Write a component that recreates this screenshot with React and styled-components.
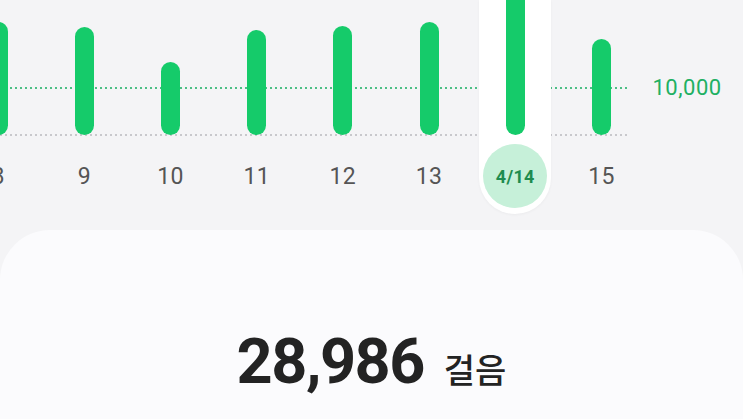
import React from "react";
import styled, { createGlobalStyle } from "styled-components";

const Global = createGlobalStyle`
  html, body { margin: 0; padding: 0; background: #f4f4f6; overflow: hidden; }
  body { font-family: Roboto, "Noto Sans", "Noto Sans CJK KR", sans-serif; }
  #root { height: 419px; }
`;

const Page = styled.div`
  height: 419px;
  display: flex;
  flex-direction: column;
  background: #f4f4f6;
  overflow: hidden;
`;

const ChartSection = styled.div`
  position: relative;
  height: 230px;
  flex: none;
`;

const GridLine = styled.div`
  position: absolute;
  left: 0;
  width: 630px;
  height: 2px;
  top: ${(p) => p.$top}px;
  background: repeating-linear-gradient(
    to right,
    ${(p) => p.$color} 0 2px,
    transparent 2px 5px
  );
`;

const Row = styled.div`
  position: relative;
  display: flex;
  align-items: flex-start;
  margin-left: -45px;
  height: 100%;
`;

const Column = styled.div`
  width: 86.2px;
  flex: none;
  display: flex;
  justify-content: center;
`;

const Track = styled.div`
  width: 72px;
  height: 214px;
  box-sizing: border-box;
  display: flex;
  flex-direction: column;
  align-items: center;
  border-radius: 0 0 36px 36px;
  background: ${(p) => (p.$selected ? "#ffffff" : "transparent")};
  box-shadow: ${(p) => (p.$selected ? "0 1px 3px rgba(0,0,0,0.04)" : "none")};
`;

const BarArea = styled.div`
  height: 135px;
  display: flex;
  align-items: flex-end;
`;

const Bar = styled.div`
  width: 19px;
  border-radius: 10px;
  background: #15cb6a;
`;

const DayLabel = styled.div`
  margin-top: 9px;
  width: 64px;
  height: 64px;
  border-radius: 50%;
  display: flex;
  align-items: center;
  justify-content: center;
  font-size: ${(p) => (p.$selected ? "18px" : "23px")};
  letter-spacing: 0.3px;
  font-weight: ${(p) => (p.$selected ? 700 : 400)};
  color: ${(p) => (p.$selected ? "#1e8c4f" : "#555555")};
  background: ${(p) => (p.$selected ? "#c6f0d9" : "transparent")};
`;

const GoalLabel = styled.div`
  margin-top: 76px;
  margin-left: 8px;
  font-size: 22px;
  letter-spacing: 0.5px;
  line-height: 24px;
  color: #20b062;
`;

const Card = styled.div`
  flex: 1;
  background: #fbfbfd;
  border-radius: 50px 50px 0 0;
  display: flex;
  justify-content: center;
  align-items: baseline;
  padding-top: 100px;
`;

const Steps = styled.span`
  font-size: 63px;
  font-weight: 700;
  letter-spacing: -1.5px;
  color: #232323;
  line-height: 1;
`;

const Unit = styled.span`
  margin-left: 20px;
  font-family: "Noto Sans CJK KR", sans-serif;
  font-size: 34px;
  font-weight: 500;
  color: #232323;
`;

const days = [
  { label: "8", h: 113 },
  { label: "9", h: 108 },
  { label: "10", h: 73 },
  { label: "11", h: 105 },
  { label: "12", h: 109 },
  { label: "13", h: 113 },
  { label: "4/14", h: 145, selected: true },
  { label: "15", h: 96 },
];

export default function App() {
  return (
    <Page>
      <Global />
      <ChartSection>
        <GridLine $top={87} $color="#4cbf85" />
        <GridLine $top={134} $color="#c8c8cc" />
        <Row>
          {days.map((d) => (
            <Column key={d.label}>
              <Track $selected={d.selected}>
                <BarArea>
                  <Bar style={{ height: d.h }} />
                </BarArea>
                <DayLabel $selected={d.selected}>{d.label}</DayLabel>
              </Track>
            </Column>
          ))}
          <GoalLabel>10,000</GoalLabel>
        </Row>
      </ChartSection>
      <Card>
        <Steps>28,986</Steps>
        <Unit>걸음</Unit>
      </Card>
    </Page>
  );
}
